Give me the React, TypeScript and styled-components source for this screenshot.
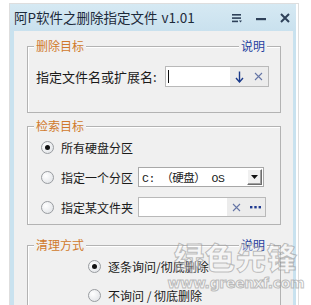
import styled, { createGlobalStyle } from 'styled-components';

const GlobalStyle = createGlobalStyle`
	html, body {
		margin: 0;
		background: #fff;
		overflow: hidden;
	}
	body {
		font-family: "Noto Sans CJK SC", "Noto Sans", sans-serif;
		color: #1a1a1a;
	}
`;

const Frame = styled.div`
	position: relative;
	margin: 3px 0 0 9px;
	width: 286px;
	border: 1px solid #dedede;
	border-bottom: none;
	background: #fff;
	padding-right: 2px;
`;

const TitleBar = styled.div`
	height: 27px;
	display: flex;
	align-items: center;
	padding-left: 4px;
	background: linear-gradient(#d6e9f3, #c9e1ee);
	font-size: 13.5px;
	color: #1d2a3a;
`;

const Title = styled.span`
	flex: 1;
	line-height: 27px;
	white-space: nowrap;
`;

const Version = styled.span`
	margin-left: 4px;
`;

const TitleButtons = styled.div`
	display: flex;
	align-items: center;
	gap: 14px;
	padding-right: 6px;
	color: #2e4159;
`;

const Body = styled.div`
	background: #f0f0f0;
	border-left: 4px solid #c9e2ef;
	border-right: 3px solid #c9e2ef;
	padding: 15px 12px 40px 13px;
	height: 300px;
`;

const Group = styled.div<{ $gap: number }>`
	position: relative;
	border: 1px solid #b3b3b3;
	box-shadow: inset 1px 1px 0 #fff;
	margin-bottom: ${(p) => p.$gap}px;
`;

const GroupHead = styled.div`
	position: absolute;
	top: -9px;
	left: 6px;
	right: 13px;
	display: flex;
	justify-content: space-between;
	font-size: 12px;
	line-height: 16px;
	pointer-events: none;
`;

const Legend = styled.span<{ $blue?: boolean }>`
	background: #f0f0f0;
	padding: 0 2px;
	color: ${(p) => (p.$blue ? '#1f3fa0' : '#d07a2c')};
`;

const FileRow = styled.div`
	display: flex;
	align-items: center;
	padding: 19px 11px 25px 8px;
	font-size: 13px;
`;

const RadioList = styled.div<{ $indent: number; $gap: number }>`
	display: flex;
	flex-direction: column;
	gap: ${(p) => p.$gap}px;
	padding: 10px 11px 7px ${(p) => p.$indent}px;
`;

const RadioRow = styled.label`
	display: flex;
	align-items: center;
	height: 20px;
	font-size: 12px;
	white-space: nowrap;
`;

const RadioDot = styled.span<{ $on?: boolean }>`
	position: relative;
	width: 11px;
	height: 11px;
	border-radius: 50%;
	border: 1px solid #999ca0;
	background: radial-gradient(circle at 35% 35%, #ffffff, #dcdfe3);
	margin-right: 7px;
	flex: none;
	&::after {
		content: '';
		display: ${(p) => (p.$on ? 'block' : 'none')};
		position: absolute;
		left: 3px;
		top: 3px;
		width: 5px;
		height: 5px;
		border-radius: 50%;
		background: #111;
	}
`;

const TextBox = styled.div<{ $w: number }>`
	display: flex;
	align-items: stretch;
	width: ${(p) => p.$w}px;
	height: 21px;
	box-sizing: border-box;
	border: 1px solid #b9b9b9;
	background: #fff;
	margin-left: auto;
`;

const BoxField = styled.div`
	flex: 1;
	display: flex;
	align-items: center;
	padding-left: 2px;
`;

const Caret = styled.span`
	width: 1px;
	height: 13px;
	background: #111;
`;

const BoxTools = styled.div`
	display: flex;
	align-items: center;
	justify-content: space-around;
	width: 38px;
	background: #ececec;
`;

const Select = styled.div`
	display: flex;
	align-items: center;
	width: 126px;
	height: 20px;
	box-sizing: border-box;
	border: 1px solid #a8a8a8;
	background: #fff;
	margin-left: 5px;
	padding: 0 1px 0 3px;
	font-size: 11.5px;
`;

const SelectText = styled.span`
	flex: 1;
	font-family: "Liberation Mono", "Noto Sans CJK SC", monospace;
	letter-spacing: -0.5px;
	white-space: pre;
`;

const DropButton = styled.span`
	width: 15px;
	height: 16px;
	box-sizing: border-box;
	display: flex;
	align-items: center;
	justify-content: center;
	background: #f0f0f0;
	border: 1px solid;
	border-color: #fff #6d6d6d #6d6d6d #fff;
	box-shadow: inset -1px -1px 0 #a0a0a0;
`;

const FolderBox = styled(TextBox)`
	height: 20px;
	margin-left: 5px;
`;

const Watermark = styled.div`
	position: absolute;
	left: 160px;
	top: 234px;
	width: 132px;
	display: flex;
	flex-direction: column;
	align-items: center;
	pointer-events: none;
	color: rgba(255, 255, 255, 0.35);
	-webkit-text-stroke: 1px rgba(140, 140, 140, 0.55);
	font-weight: 900;
`;

const MarkBig = styled.span`
	font-size: 30px;
	line-height: 36px;
	letter-spacing: 1px;
`;

const MarkSmall = styled.span`
	font-family: "DejaVu Sans", sans-serif;
	font-size: 14px;
	line-height: 18px;
	letter-spacing: -0.3px;
`;

const Cross = ({ color = '#6676a6' }: { color?: string }) => (
	<svg width="9" height="9" viewBox="0 0 9 9">
		<path d="M1 1 L8 8 M8 1 L1 8" stroke={color} strokeWidth="1.1" fill="none" />
	</svg>
);

const DownArrow = () => (
	<svg width="9" height="12" viewBox="0 0 9 12">
		<path d="M4.5 0.5 V10.5" stroke="#1b3b8b" strokeWidth="1.4" />
		<path d="M1 7 L4.5 11 L8 7" stroke="#1b3b8b" strokeWidth="1.4" fill="none" />
	</svg>
);

const Dots = () => (
	<svg width="11" height="3" viewBox="0 0 11 3">
		<rect x="0" y="0" width="2.4" height="2.4" fill="#1f3a90" />
		<rect x="4.3" y="0" width="2.4" height="2.4" fill="#1f3a90" />
		<rect x="8.6" y="0" width="2.4" height="2.4" fill="#1f3a90" />
	</svg>
);

function App() {
	return (
		<>
			<GlobalStyle />
			<Frame>
				<TitleBar>
					<Title>
						阿P软件之删除指定文件<Version>v1.01</Version>
					</Title>
					<TitleButtons>
						<svg width="10" height="10" viewBox="0 0 10 10">
							<rect x="0" y="1" width="9" height="1.6" fill="currentColor" />
							<rect x="0" y="4.3" width="9" height="1.6" fill="currentColor" />
							<rect x="0" y="7.6" width="6" height="1.6" fill="currentColor" />
							<path d="M7 7.4 L10 7.4 L8.5 9.6 Z" fill="currentColor" />
						</svg>
						<svg width="10" height="10" viewBox="0 0 10 10">
							<rect x="0" y="5" width="10" height="2.2" fill="currentColor" />
						</svg>
						<svg width="10" height="10" viewBox="0 0 10 10">
							<path d="M1 1 L9 9 M9 1 L1 9" stroke="currentColor" strokeWidth="2" fill="none" />
						</svg>
					</TitleButtons>
				</TitleBar>
				<Body>
					<Group $gap={13}>
						<GroupHead>
							<Legend>删除目标</Legend>
							<Legend $blue>说明</Legend>
						</GroupHead>
						<FileRow>
							<span>指定文件名或扩展名:</span>
							<TextBox $w={104}>
								<BoxField>
									<Caret />
								</BoxField>
								<BoxTools>
									<DownArrow />
									<Cross />
								</BoxTools>
							</TextBox>
						</FileRow>
					</Group>
					<Group $gap={20}>
						<GroupHead>
							<Legend>检索目标</Legend>
						</GroupHead>
						<RadioList $indent={13} $gap={10}>
							<RadioRow>
								<RadioDot $on />
								所有硬盘分区
							</RadioRow>
							<RadioRow>
								<RadioDot />
								指定一个分区
								<Select>
									<SelectText>C: （硬盘） OS</SelectText>
									<DropButton>
										<svg width="7" height="4" viewBox="0 0 7 4">
											<path d="M0 0 H7 L3.5 4 Z" fill="#111" />
										</svg>
									</DropButton>
								</Select>
							</RadioRow>
							<RadioRow>
								<RadioDot />
								指定某文件夹
								<FolderBox $w={128}>
									<BoxField />
									<BoxTools>
										<Cross />
										<Dots />
									</BoxTools>
								</FolderBox>
							</RadioRow>
						</RadioList>
					</Group>
					<Group $gap={0}>
						<GroupHead>
							<Legend>清理方式</Legend>
							<Legend $blue>说明</Legend>
						</GroupHead>
						<RadioList $indent={60} $gap={9}>
							<RadioRow>
								<RadioDot $on />
								逐条询问/彻底删除
							</RadioRow>
							<RadioRow>
								<RadioDot />
								不询问 / 彻底删除
							</RadioRow>
						</RadioList>
					</Group>
				</Body>
				<Watermark>
					<MarkBig>绿色先锋</MarkBig>
					<MarkSmall>www.greenxf.com</MarkSmall>
				</Watermark>
			</Frame>
		</>
	);
}

export default App;
